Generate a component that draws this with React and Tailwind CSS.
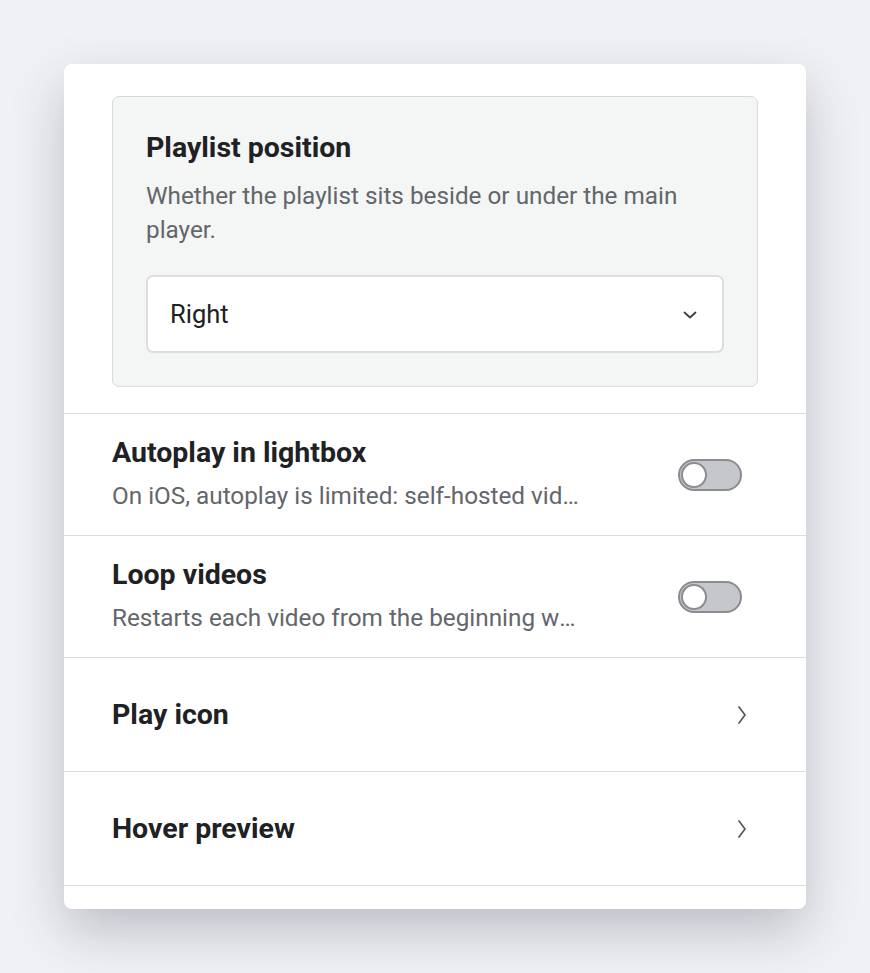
import { useState } from "react"

const Toggle = ({ checked, onChange }) => (
  <button
    type="button"
    role="switch"
    aria-checked={checked}
    onClick={() => onChange(!checked)}
    className={`relative flex h-[32px] w-[64px] shrink-0 items-center rounded-full border-2 px-[1px] ${
      checked ? "border-[#1a73e8] bg-[#1a73e8]" : "border-[#8b8c90] bg-[#c6c7cb]"
    }`}
  >
    <span
      className={`block h-[26px] w-[26px] rounded-full border-2 border-[#8b8c90] bg-white transition-transform ${
        checked ? "translate-x-[32px]" : "translate-x-0"
      }`}
    />
  </button>
)

const ToggleRow = ({ title, description }) => {
  const [on, setOn] = useState(false)
  return (
    <div className="flex items-center justify-between border-b border-[#dadbdd] pb-[22px] pl-[48px] pr-[64px] pt-[23px]">
      <div className="min-w-0">
        <div className="text-[28.5px] font-bold leading-[32px] text-[#202124]">{title}</div>
        <div className="mt-[10px] max-w-[474px] truncate text-[24.3px] leading-[34px] text-[#63666b]">
          {description}
        </div>
      </div>
      <Toggle checked={on} onChange={setOn} />
    </div>
  )
}

const NavRow = ({ title }) => (
  <button
    type="button"
    className="flex h-[114px] w-full items-center justify-between border-b border-[#dadbdd] pl-[48px] pr-[59px] text-left"
  >
    <span className="text-[28.5px] font-bold leading-[32px] text-[#202124]">{title}</span>
    <svg width="10" height="20" viewBox="0 0 10 20" fill="none" stroke="#55585d" strokeWidth="1.7" strokeLinecap="round" strokeLinejoin="round">
      <path d="M2 2 L8 10 L2 18" />
    </svg>
  </button>
)

export default function App() {
  const [position, setPosition] = useState("Right")

  return (
    <div
      className="min-h-[973px] bg-[#f0f1f5] px-[64px] pt-[64px]"
      style={{ fontFamily: "Roboto, 'Noto Sans', Arial, sans-serif" }}
    >
      <div className="h-[845px] w-[742px] overflow-hidden rounded-[8px] bg-white shadow-[0_22px_52px_rgba(40,44,60,0.25)]">
        {/* Playlist position card */}
        <div className="px-[48px] pb-[26px] pt-[32px]">
          <div className="rounded-[7px] border border-[#d8d9da] bg-[#f4f5f5] px-[33px] pb-[33px] pt-[35px]">
            <div className="text-[28.5px] font-bold leading-[32px] text-[#202124]">Playlist position</div>
            <p className="mt-[15px] text-[24.3px] leading-[34px] text-[#63666b]">
              Whether the playlist sits beside or under the main player.
            </p>
            <div className="relative mt-[28px]">
              <select
                value={position}
                onChange={(e) => setPosition(e.target.value)}
                className="h-[78px] w-full appearance-none rounded-[7px] border-2 border-[#dcdddf] bg-white pl-[22px] pr-[56px] text-[25.5px] text-[#202124] outline-none"
              >
                <option>Right</option>
                <option>Left</option>
                <option>Below</option>
              </select>
              <svg
                className="pointer-events-none absolute right-[27px] top-[36px]"
                width="14"
                height="8"
                viewBox="0 0 14 8"
                fill="none"
                stroke="#3c4043"
                strokeWidth="1.8"
                strokeLinecap="round"
                strokeLinejoin="round"
              >
                <path d="M1.5 1.5 L7 6.5 L12.5 1.5" />
              </svg>
            </div>
          </div>
        </div>

        <div className="border-t border-[#dadbdd]">
          <ToggleRow
            title="Autoplay in lightbox"
            description="On iOS, autoplay is limited: self-hosted videos must be muted to start automatically."
          />
          <ToggleRow
            title="Loop videos"
            description="Restarts each video from the beginning when it reaches the end."
          />
          <NavRow title="Play icon" />
          <NavRow title="Hover preview" />
        </div>
      </div>
    </div>
  )
}
